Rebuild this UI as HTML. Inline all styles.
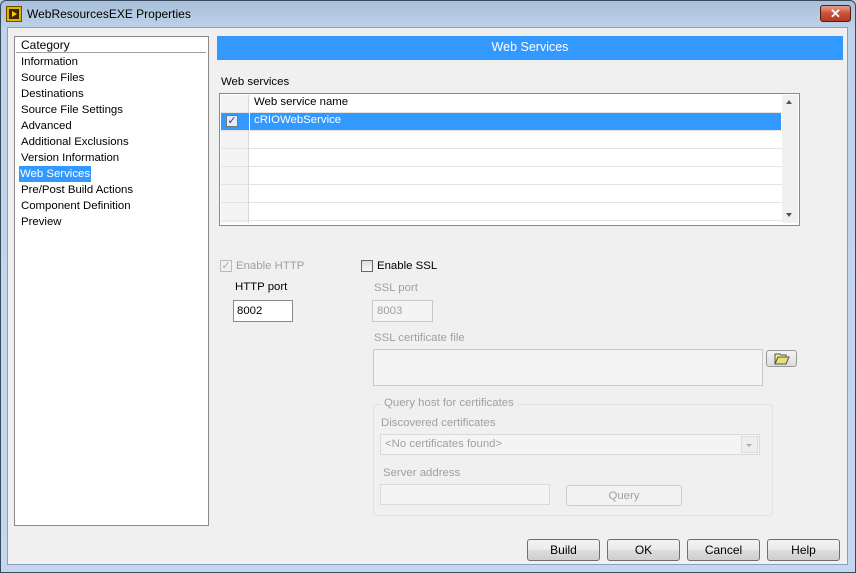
<!DOCTYPE html>
<html><head><style>
*{box-sizing:border-box;margin:0;padding:0}
body{width:856px;height:573px;overflow:hidden;font-family:"Liberation Sans",sans-serif;font-size:11.4px;background:#b9cde4;position:relative}
.a{position:absolute}
.win{left:0;top:0;width:856px;height:573px;border:1px solid #3a4a5e;border-radius:6px 6px 0 0;background:linear-gradient(#a8bfd9,#bfd3ea 28px,#c4d7ec)}
.client{left:7px;top:27px;width:841px;height:538px;background:#f0f0f0;border:1px solid #8aa0ba}
.t{color:#000;white-space:nowrap}
.g{color:#a0a0a0}
.btn{border:1px solid #707070;border-radius:3px;background:linear-gradient(#f2f2f2,#ebebeb 50%,#dddddd 51%,#cfcfcf);text-align:center;line-height:20px;font-size:12px}
</style></head><body>
<div class="a win"></div>
<div class="a" style="left:6px;top:6px;width:16px;height:16px;background:#e8b000;border:1px solid #6b4e00"><div class="a" style="left:2px;top:2px;width:10px;height:10px;background:#3a2a00"></div><div class="a" style="left:5px;top:4px;width:0;height:0;border-left:5px solid #f4d000;border-top:3px solid transparent;border-bottom:3px solid transparent"></div></div>
<div class="a t" style="left:27px;top:7px;font-size:12px">WebResourcesEXE Properties</div>
<div class="a" style="left:820px;top:5px;width:31px;height:17px;border:1px solid #5a1a10;border-radius:3px;background:linear-gradient(#e7a08c,#c9513a 50%,#b23a22);color:#fff;text-align:center;font-weight:bold;font-size:13px;line-height:15px">✕</div>
<div class="a client"></div>

<div class="a" style="left:14px;top:36px;width:195px;height:490px;background:#fff;border:1px solid #8a8a8a"></div>
<div class="a t" style="left:16px;top:38px;width:190px;height:15px;border-bottom:1px solid #a0a0a0;padding-left:5px;line-height:14px;font-size:12px">Category</div>
<div class="a t" style="left:21px;top:54px;line-height:16px">Information<br>Source Files<br>Destinations<br>Source File Settings<br>Advanced<br>Additional Exclusions<br>Version Information<br><span style="background:#3399ff;color:#fff;display:inline-block;margin-left:-2px;padding:0 1px">Web Services</span><br>Pre/Post Build Actions<br>Component Definition<br>Preview</div>

<div class="a" style="left:217px;top:36px;width:626px;height:24px;background:#3399ff;color:#fff;text-align:center;line-height:23px;font-size:12.5px">Web Services</div>
<div class="a t" style="left:221px;top:76px">Web services</div>
<div class="a" style="left:219px;top:93px;width:581px;height:133px;border:1px solid #8a8a8a;background:#fff"></div>
<div class="a" style="left:221px;top:95px;width:561px;height:128px;background:repeating-linear-gradient(#fff 0,#fff 17px,#e4e4e4 17px,#e4e4e4 18px)"></div>
<div class="a" style="left:221px;top:95px;width:28px;height:128px;border-right:1px solid #d8d8d8;background:repeating-linear-gradient(#f4f4f4 0,#f4f4f4 17px,#e4e4e4 17px,#e4e4e4 18px)"></div>
<div class="a t" style="left:254px;top:96px">Web service name</div>
<div class="a" style="left:221px;top:113px;width:560px;height:17px;background:#3399ff"></div>
<div class="a" style="left:249px;top:113px;width:1px;height:17px;background:#fff"></div>
<div class="a" style="left:226px;top:115px;width:12px;height:12px;border:1px solid #777;background:#e6ecf6;color:#223a9a;font-size:11px;line-height:10px;text-align:center">✓</div>
<div class="a t" style="left:254px;top:114px;color:#fff">cRIOWebService</div>
<div class="a" style="left:782px;top:95px;width:16px;height:128px;background:#f0f0f0"></div>
<div class="a" style="left:786px;top:100px;border-left:3px solid transparent;border-right:3px solid transparent;border-bottom:4px solid #555"></div>
<div class="a" style="left:786px;top:213px;border-left:3px solid transparent;border-right:3px solid transparent;border-top:4px solid #555"></div>

<div class="a" style="left:220px;top:260px;width:12px;height:12px;border:1px solid #bbb;color:#aaa;font-size:11px;line-height:10px;text-align:center">✓</div>
<div class="a t g" style="left:236px;top:260px">Enable HTTP</div>
<div class="a" style="left:361px;top:260px;width:12px;height:12px;border:1px solid #666;background:linear-gradient(#ddd,#f8f8f8)"></div>
<div class="a t" style="left:377px;top:260px">Enable SSL</div>
<div class="a t" style="left:235px;top:281px">HTTP port</div>
<div class="a" style="left:233px;top:300px;width:60px;height:22px;border:1px solid #8a8a8a;background:#fff;padding:4px 3px" ><span class="t">8002</span></div>
<div class="a t g" style="left:374px;top:282px">SSL port</div>
<div class="a g" style="left:372px;top:300px;width:61px;height:22px;border:1px solid #c8c8c8;background:#f4f4f4;padding:4px 4px">8003</div>
<div class="a t g" style="left:374px;top:332px">SSL certificate file</div>
<div class="a" style="left:373px;top:349px;width:390px;height:37px;border:1px solid #c8c8c8;background:#f4f4f4"></div>
<div class="a" style="left:766px;top:350px;width:31px;height:17px;border:1px solid #999;border-radius:3px;background:linear-gradient(#f4f4f4,#dcdcdc)">
<svg width="29" height="15" class="a" style="left:0;top:0"><path d="M8 3h5l1 1h5v2H11l-3 7z" fill="#f4f09a" stroke="#555" stroke-width="1"/><path d="M8 13l3-7h11l-3 7z" fill="#e8e070" stroke="#555" stroke-width="1"/></svg></div>
<div class="a" style="left:373px;top:404px;width:400px;height:112px;border:1px solid #e2e2e2;border-radius:3px"></div>
<div class="a t g" style="left:381px;top:397px;background:#f0f0f0;padding:0 3px">Query host for certificates</div>
<div class="a t g" style="left:381px;top:417px">Discovered certificates</div>
<div class="a g" style="left:380px;top:434px;width:380px;height:21px;border:1px solid #dadada;background:#f4f4f4;padding:3px 4px">&lt;No certificates found&gt;</div>
<div class="a" style="left:741px;top:436px;width:17px;height:17px;border:1px solid #ddd;background:#eee"></div>
<div class="a" style="left:746px;top:444px;border-left:3px solid transparent;border-right:3px solid transparent;border-top:3px solid #aaa"></div>
<div class="a t g" style="left:383px;top:467px">Server address</div>
<div class="a" style="left:380px;top:484px;width:170px;height:21px;border:1px solid #dadada;background:#f4f4f4"></div>
<div class="a g" style="left:566px;top:485px;width:116px;height:21px;border:1px solid #ccc;border-radius:3px;background:#f2f2f2;text-align:center;line-height:20px">Query</div>

<div class="a btn" style="left:527px;top:539px;width:73px;height:22px">Build</div>
<div class="a btn" style="left:607px;top:539px;width:73px;height:22px">OK</div>
<div class="a btn" style="left:687px;top:539px;width:73px;height:22px">Cancel</div>
<div class="a btn" style="left:767px;top:539px;width:73px;height:22px">Help</div>
</body></html>
